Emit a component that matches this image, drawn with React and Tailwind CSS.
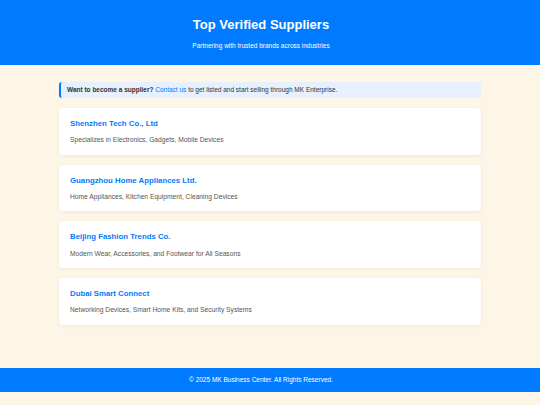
import React from 'react';

const suppliers = [
    { name: 'Shenzhen Tech Co., Ltd', desc: 'Specializes in Electronics, Gadgets, Mobile Devices' },
    { name: 'Guangzhou Home Appliances Ltd.', desc: 'Home Appliances, Kitchen Equipment, Cleaning Devices' },
    { name: 'Beijing Fashion Trends Co.', desc: 'Modern Wear, Accessories, and Footwear for All Seasons' },
    { name: 'Dubai Smart Connect', desc: 'Networking Devices, Smart Home Kits, and Security Systems' },
];

export default function App() {
    return (
        <div
            className="min-h-[405px] bg-[#fdf5e6] text-[#333] text-[6.5px] leading-[1.4]"
            style={{ fontFamily: '"Liberation Sans", Arial, sans-serif' }}
        >
            <header className="bg-[#007bff] text-white text-center h-[65px] pt-[17px] pr-[18px]">
                <h1 className="text-[13px] font-bold leading-[1.2]">Top Verified Suppliers</h1>
                <p className="mt-[8px] text-[6.5px]">Partnering with trusted brands across industries</p>
            </header>

            <main className="w-[422px] mx-auto pt-[17px] pb-[43px]">
                <div className="bg-[#e6f0fe] border-l-[2px] border-[#007bff] rounded-[3px] h-[16px] flex items-center pl-[6px] mb-[10px]">
                    <p>
                        <span className="font-bold">Want to become a supplier?</span>{' '}
                        <a className="text-[#007bff]">Contact us</a> to get listed and start selling through MK Enterprise.
                    </p>
                </div>

                <div className="flex flex-col gap-[10px]">
                    {suppliers.map(s => (
                        <div key={s.name} className="bg-white rounded-[4px] shadow-[0_1px_4px_rgba(0,0,0,0.06)] h-[46.7px] px-[11px] pt-[11px]">
                            <h3 className="text-[#007bff] font-bold text-[7.8px] leading-[1.3]">{s.name}</h3>
                            <p className="text-[#555] text-[6.7px] mt-[6px]">{s.desc}</p>
                        </div>
                    ))}
                </div>
            </main>

            <footer className="bg-[#007bff] text-white text-center h-[24px] flex items-center justify-center pr-[18px]">
                <p>© 2025 MK Business Center. All Rights Reserved.</p>
            </footer>
        </div>
    );
}
